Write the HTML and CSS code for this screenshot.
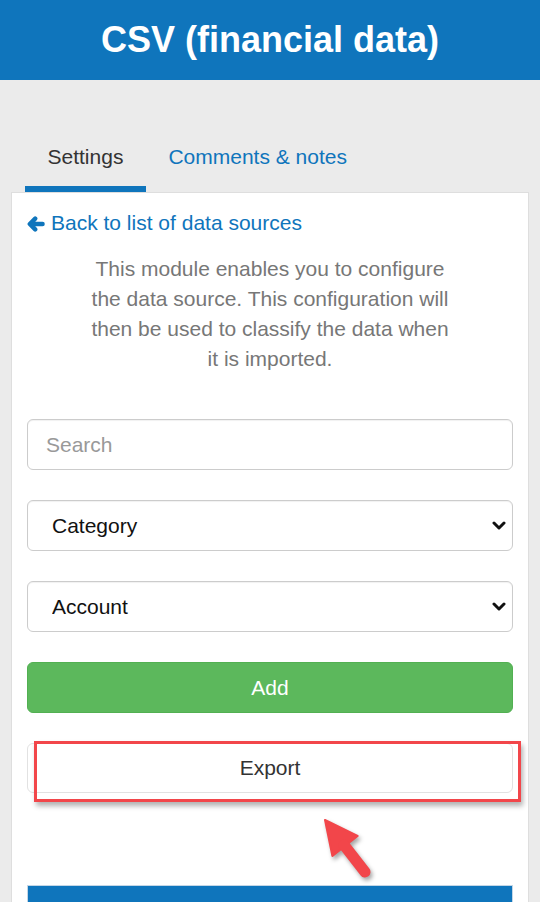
FILE: index.html
```html
<!DOCTYPE html>
<html lang="en">
<head>
<meta charset="utf-8">
<title>CSV (financial data)</title>
<link rel="stylesheet" href="styles.css">
</head>
<body>
<header class="topbar">
  <h1 class="title">CSV (financial data)</h1>
</header>
<main class="page">
  <nav class="tabs">
    <a class="tab tab-active">Settings</a>
    <a class="tab">Comments &amp; notes</a>
  </nav>
  <section class="card">
    <a class="back-link">
      <svg class="back-icon" viewBox="0 0 18 16" width="18" height="16" aria-hidden="true">
        <path d="M8.2 2.6 L2.8 8 L8.2 13.4 M3.4 8 H15.6" fill="none" stroke="currentColor" stroke-width="4.4" stroke-linecap="round" stroke-linejoin="round"/>
      </svg>Back to list of data sources</a>
    <p class="intro">This module enables you to configure the data source. This configuration will then be used to classify the data when it is imported.</p>
    <form class="form">
      <input class="control" type="text" placeholder="Search">
      <div class="select-wrap">
        <select class="control select"><option>Category</option></select>
        <svg class="chevron" viewBox="0 0 14 9" width="14" height="9" aria-hidden="true">
          <path d="M2 2 L7 7 L12 2" fill="none" stroke="#111" stroke-width="3" stroke-linecap="round" stroke-linejoin="round"/>
        </svg>
      </div>
      <div class="select-wrap">
        <select class="control select"><option>Account</option></select>
        <svg class="chevron" viewBox="0 0 14 9" width="14" height="9" aria-hidden="true">
          <path d="M2 2 L7 7 L12 2" fill="none" stroke="#111" stroke-width="3" stroke-linecap="round" stroke-linejoin="round"/>
        </svg>
      </div>
      <button class="btn btn-add" type="button">Add</button>
      <div class="export-wrap">
        <button class="btn btn-export" type="button">Export</button>
        <div class="highlight"></div>
        <svg class="pointer" viewBox="0 0 60 70" width="60" height="70" aria-hidden="true">
          <polygon points="10,8 42.6,24 17.4,44" fill="#f2464a" stroke="#f2464a" stroke-width="2" stroke-linejoin="round"/>
          <line x1="29" y1="33" x2="50" y2="60" stroke="#f2464a" stroke-width="11" stroke-linecap="round"/>
        </svg>
      </div>
    </form>
    <div class="table-head"></div>
  </section>
</main>
</body>
</html>
```
FILE: styles.css
```css
html {
  overflow: hidden;
}
body {
  margin: 0;
  background: #ebebeb;
  font-family: "Liberation Sans", Arial, sans-serif;
  font-size: 21px;
  line-height: 30px;
  color: #333;
}
.topbar {
  height: 80px;
  background: #0f75bc;
  display: flex;
  align-items: center;
  justify-content: center;
}
.title {
  margin: 0;
  font-size: 36px;
  line-height: 80px;
  font-weight: bold;
  color: #fff;
}
.page {
  padding: 47px 11px 0;
}
.tabs {
  display: flex;
  padding-left: 14px;
}
.tab {
  display: block;
  padding: 15px 22.5px 14px;
  color: #0f75bc;
  border-bottom: 6px solid transparent;
}
.tab-active {
  color: #333;
  border-bottom-color: #0f75bc;
}
.card {
  background: #fff;
  border: 1px solid #dedede;
  border-bottom: none;
  padding: 15px 15px 0;
}
.back-link {
  display: flex;
  align-items: center;
  gap: 6px;
  color: #0f75bc;
}
.back-icon {
  flex: none;
  margin-top: 1px;
}
.intro {
  max-width: 365px;
  margin: 16px auto 45px;
  text-align: center;
  color: #777;
}
.form {
  display: flex;
  flex-direction: column;
  gap: 30px;
}
.control {
  box-sizing: border-box;
  display: block;
  width: 100%;
  height: 51px;
  margin: 0;
  padding: 0 18px;
  border: 1px solid #ccc;
  border-radius: 6px;
  background: #fff;
  font-family: inherit;
  font-size: 21px;
  color: #222;
  box-shadow: inset 0 1px 1px rgba(0,0,0,0.06);
}
.control::placeholder {
  color: #999;
}
.select-wrap {
  position: relative;
}
.select {
  -webkit-appearance: none;
  appearance: none;
  padding-left: 24px;
  color: #111;
}
.chevron {
  position: absolute;
  right: 7px;
  top: 21px;
  pointer-events: none;
}
.btn {
  box-sizing: border-box;
  display: block;
  width: 100%;
  margin: 0;
  border-radius: 6px;
  font-family: inherit;
  font-size: 21px;
  line-height: 30px;
}
.btn-add {
  height: 51px;
  background: #5cb85c;
  border: 1px solid #52b052;
  color: #fff;
}
.export-wrap {
  position: relative;
}
.btn-export {
  height: 50px;
  background: #fff;
  border: 1px solid #e2e2e2;
  color: #333;
}
.highlight {
  position: absolute;
  left: 7px;
  top: -2px;
  width: 487px;
  height: 61px;
  box-sizing: border-box;
  border: 3px solid #f2464a;
  box-shadow: 2px 4px 5px rgba(0,0,0,0.3);
}
.pointer {
  position: absolute;
  left: 288px;
  top: 69px;
  filter: drop-shadow(2px 3px 2px rgba(0,0,0,0.35));
}
.table-head {
  margin-top: 92px;
  height: 20px;
  background: #0f75bc;
  border: 1px solid #c3d6e6;
  border-bottom: none;
}
```
